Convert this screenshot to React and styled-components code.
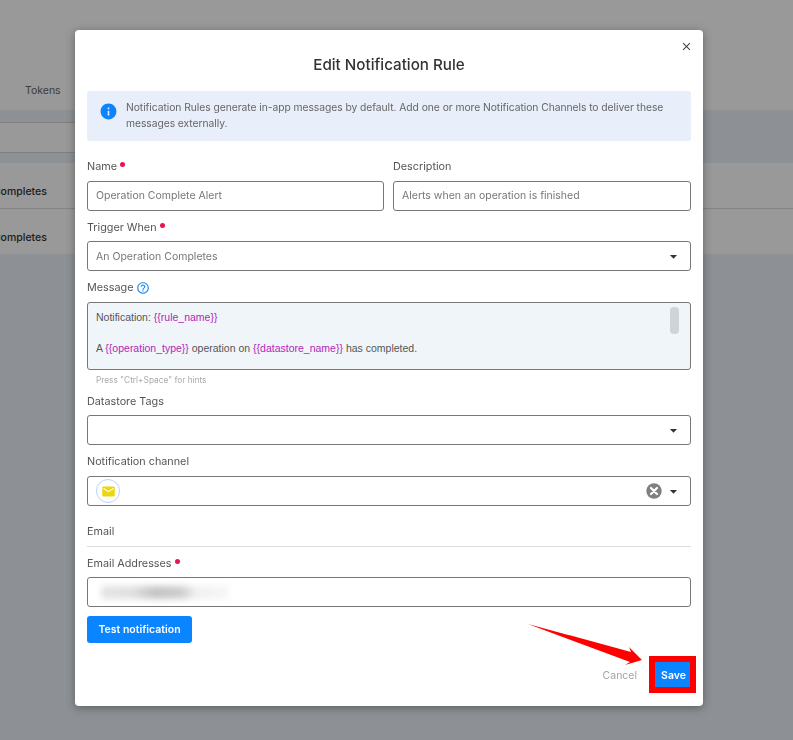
import React from "react";
import styled, { createGlobalStyle } from "styled-components";
import { MdInfo, MdHelpOutline, MdArrowDropDown, MdEmail, MdClose } from "react-icons/md";

const GlobalStyle = createGlobalStyle`
  html, body {
    margin: 0;
    padding: 0;
    height: 100%;
    overflow: hidden;
    background: #fff;
    font-family: Inter, "Noto Sans", sans-serif;
  }
`;

/* page behind the dialog */
const Page = styled.div`
  height: 740px;
  display: flex;
  flex-direction: column;
  background: #ebf2f8;
`;

const TopBar = styled.div`
  height: 110px;
  background: #fff;
  display: flex;
  align-items: flex-end;
  padding: 0 0 13px 25px;
  box-sizing: border-box;
  font-size: 10.5px;
  color: #666;
`;

const SearchBand = styled.div`
  height: 53px;
  padding-top: 12px;
  box-sizing: border-box;
`;

const SearchBox = styled.div`
  width: 120px;
  height: 31px;
  background: #fff;
  border-top: 1px solid #d6d6d6;
  border-bottom: 1px solid #d6d6d6;
  box-sizing: border-box;
`;

const Row = styled.div`
  height: 45.5px;
  background: #fff;
  border-bottom: ${(p) => (p.$line ? "1px solid #ddd" : "none")};
  box-sizing: border-box;
  display: flex;
  align-items: center;
  padding-top: 12px;
  font-size: 10.5px;
  font-weight: 500;
  color: #333;
  white-space: nowrap;
  overflow: hidden;
`;

const RowText = styled.span`
  margin-left: -76px;
`;

/* dialog */
const Backdrop = styled.div`
  position: fixed;
  inset: 0;
  background: rgba(0, 0, 0, 0.4);
`;

const Modal = styled.div`
  position: absolute;
  left: 75px;
  top: 30px;
  width: 628px;
  height: 676px;
  box-sizing: border-box;
  padding: 0 12px;
  background: #fff;
  border-radius: 4px;
  box-shadow: 0 2px 10px rgba(0, 0, 0, 0.35);
`;

const CloseButton = styled.button`
  position: absolute;
  top: 9px;
  right: 10px;
  width: 14px;
  height: 14px;
  padding: 0;
  border: 0;
  background: none;
  color: #444;
  display: flex;
  align-items: center;
  justify-content: center;
`;

const Title = styled.h2`
  margin: 0;
  padding-top: 24px;
  height: 61px;
  box-sizing: border-box;
  text-align: center;
  font-size: 15.2px;
  line-height: 21px;
  font-weight: 500;
  color: #333;
`;

const InfoBox = styled.div`
  height: 50px;
  box-sizing: border-box;
  padding: 8px 20px 0 12px;
  display: flex;
  gap: 8px;
  background: #e8eefa;
  border-radius: 3px;
  font-size: 10.3px;
  letter-spacing: -0.05px;
  line-height: 16px;
  color: #666;
  svg {
    flex: none;
    margin-top: 3px;
    color: #0a84ff;
  }
`;

const Columns = styled.div`
  display: grid;
  grid-template-columns: 297px 298px;
  gap: 9px;
  margin-top: 17px;
`;

const Field = styled.div`
  margin-top: ${(p) => p.$top ?? 9}px;
`;

const Label = styled.label`
  display: flex;
  align-items: center;
  gap: 3px;
  height: 16px;
  padding-top: 1px;
  margin-bottom: ${(p) => p.$gap ?? 6}px;
  font-size: 10.8px;
  line-height: 16px;
  color: #555;
`;

const Required = styled.span`
  width: 5px;
  height: 5px;
  margin: -5px 0 0;
  border-radius: 50%;
  background: #e8134f;
`;

const Control = styled.div`
  height: 30px;
  box-sizing: border-box;
  padding: 0 8px ${(p) => (p.$text ? "2px" : "0")};
  display: flex;
  align-items: center;
  border: 1px solid #777;
  border-radius: 3px;
  background: #fff;
  font-size: 10.5px;
  color: #777;
`;

const Value = styled.span`
  flex: 1;
`;

const Caret = styled(MdArrowDropDown)`
  flex: none;
  color: #333;
`;

const ClearIcon = styled.svg`
  flex: none;
  margin-right: 3px;
`;

const HelpIcon = styled(MdHelpOutline)`
  color: #1b8cf5;
`;

const ChannelBadge = styled.span`
  width: 24px;
  height: 24px;
  box-sizing: border-box;
  border: 1px solid #b6d4fb;
  border-radius: 50%;
  display: flex;
  align-items: center;
  justify-content: center;
  color: #eed60f;
`;

const Editor = styled.div`
  position: relative;
  height: 68px;
  box-sizing: border-box;
  padding: 7px 8px 0;
  border: 1px solid #777;
  border-radius: 3px;
  background: #f0f5fa;
  font-family: "Liberation Sans", Arial, sans-serif;
  font-size: 10.5px;
  line-height: 15.5px;
  color: #555;
`;

const EditorLine = styled.div`
  min-height: 15.5px;
`;

const Token = styled.span`
  color: #b526b8;
`;

const ScrollThumb = styled.div`
  position: absolute;
  top: 4px;
  right: 11px;
  width: 9px;
  height: 27px;
  border-radius: 4px;
  background: #d0d3d8;
`;

const Hint = styled.div`
  height: 14px;
  margin: 3px 0 0 9px;
  font-size: 8.3px;
  line-height: 14px;
  color: #aaa;
`;

const SectionTitle = styled.div`
  margin-top: 18px;
  height: 16px;
  padding-bottom: 6px;
  border-bottom: 1px solid #ddd;
  font-size: 10.8px;
  line-height: 16px;
  color: #555;
`;

const BlurredEmail = styled.div`
  width: 128px;
  height: 13px;
  margin-left: 5px;
  filter: blur(3px);
  background: linear-gradient(
    90deg,
    #e4e4e4 0%,
    #e0e0e0 25%,
    #c4c4c4 42%,
    #cccccc 62%,
    #f0f0f0 74%,
    #f7f7f7 100%
  );
`;

const PrimaryButton = styled.button`
  height: ${(p) => p.$height}px;
  width: ${(p) => p.$width}px;
  padding: 0;
  border: 0;
  border-radius: 3px;
  background: #0a84ff;
  color: #fff;
  font-family: inherit;
  font-size: 10.5px;
  font-weight: 600;
`;

const SaveButton = styled(PrimaryButton)`
  padding: 1px 0 0 2px;
  border-radius: 0;
`;

const TestRow = styled.div`
  margin-top: 9px;
`;

const Footer = styled.div`
  position: absolute;
  right: 13px;
  bottom: 19px;
  display: flex;
  align-items: center;
  gap: 18px;
`;

const CancelButton = styled.button`
  padding: 1px 0 0;
  border: 0;
  background: none;
  color: #a3a3a3;
  font-family: inherit;
  font-size: 10.5px;
`;

const SaveFrame = styled.div`
  outline: 6px solid #f00;
  display: flex;
`;

const Arrow = styled.svg`
  position: absolute;
  left: 520px;
  top: 616px;
`;

const Select = ({ value }) => (
  <Control>
    <Value>{value}</Value>
    <Caret size={17} />
  </Control>
);

export default function App() {
  return (
    <>
      <GlobalStyle />
      <Page>
        <TopBar>Tokens</TopBar>
        <SearchBand>
          <SearchBox />
        </SearchBand>
        <Row $line>
          <RowText>An Operation Completes</RowText>
        </Row>
        <Row>
          <RowText>An Operation Completes</RowText>
        </Row>
      </Page>
      <Backdrop />
      <Modal>
        <CloseButton aria-label="Close">
          <MdClose size={13} />
        </CloseButton>
        <Title>Edit Notification Rule</Title>
        <InfoBox>
          <MdInfo size={19} />
          <span>
            Notification Rules generate in-app messages by default. Add one or more Notification Channels to deliver these messages externally.
          </span>
        </InfoBox>
        <Columns>
          <div>
            <Label>Name <Required /></Label>
            <Control $text>Operation Complete Alert</Control>
          </div>
          <div>
            <Label>Description</Label>
            <Control $text>Alerts when an operation is finished</Control>
          </div>
        </Columns>
        <Field $top={8}>
          <Label $gap={5}>Trigger When <Required /></Label>
          <Select value="An Operation Completes" />
        </Field>
        <Field $top={8}>
          <Label>Message <HelpIcon size={14} /></Label>
          <Editor>
            <EditorLine>Notification: <Token>{"{{rule_name}}"}</Token></EditorLine>
            <EditorLine />
            <EditorLine>
              A <Token>{"{{operation_type}}"}</Token> operation on <Token>{"{{datastore_name}}"}</Token> has completed.
            </EditorLine>
            <ScrollThumb />
          </Editor>
          <Hint>Press "Ctrl+Space" for hints</Hint>
        </Field>
        <Field $top={6}>
          <Label $gap={5}>Datastore Tags</Label>
          <Select />
        </Field>
        <Field $top={8}>
          <Label>Notification channel</Label>
          <Control>
            <Value>
              <ChannelBadge>
                <MdEmail size={15} />
              </ChannelBadge>
            </Value>
            <ClearIcon width="16" height="16" viewBox="0 0 16 16">
              <circle cx="8" cy="8" r="7.7" fill="#808080" />
              <path d="M5 5l6 6M11 5l-6 6" stroke="#fff" strokeWidth="2.2" strokeLinecap="round" />
            </ClearIcon>
            <Caret size={17} />
          </Control>
        </Field>
        <SectionTitle>Email</SectionTitle>
        <Field $top={8}>
          <Label $gap={5}>Email Addresses <Required /></Label>
          <Control>
            <BlurredEmail />
          </Control>
        </Field>
        <TestRow>
          <PrimaryButton $width={105} $height={27}>Test notification</PrimaryButton>
        </TestRow>
        <Footer>
          <CancelButton>Cancel</CancelButton>
          <SaveFrame>
            <SaveButton $width={35} $height={25}>Save</SaveButton>
          </SaveFrame>
        </Footer>
      </Modal>
      <Arrow width="130" height="55" viewBox="0 0 130 55">
        <polygon points="8,8 111,36 109,31 122,44 105,49 110,46" fill="#f00" />
      </Arrow>
    </>
  );
}
